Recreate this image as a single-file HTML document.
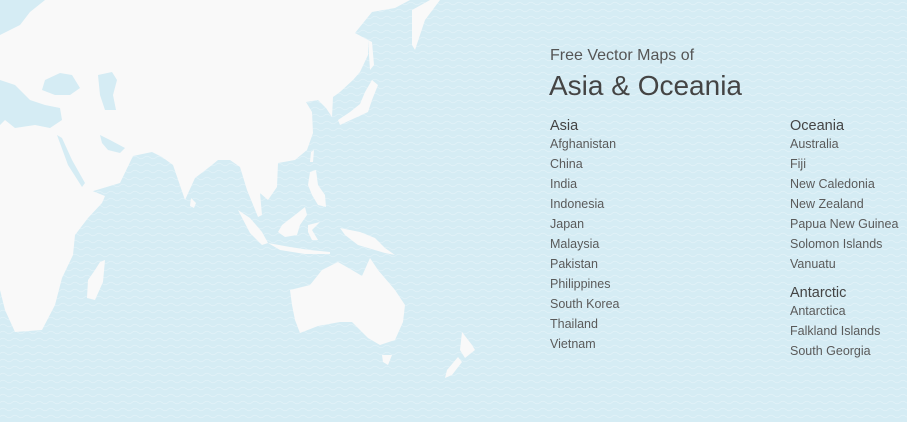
<!DOCTYPE html>
<html><head><meta charset="utf-8">
<style>
html,body{margin:0;padding:0;}
body{width:907px;height:422px;overflow:hidden;position:relative;background:#d5ecf4;font-family:"Liberation Sans",sans-serif;color:#555;}
svg{position:absolute;left:0;top:0;}
.t{position:absolute;white-space:nowrap;}
.col{position:absolute;top:114px;}
.col h3{margin:0;font-weight:normal;font-size:14.5px;color:#444;height:20px;line-height:20px;position:relative;top:2px;}
.col div{font-size:12.5px;line-height:20px;height:20px;color:#5a5a5a;}
</style></head><body>
<svg width="907" height="422" viewBox="0 0 907 422">
<defs>
<pattern id="w" width="12" height="7" patternUnits="userSpaceOnUse">
<path d="M0 3.5 Q3 1 6 3.5 T12 3.5" fill="none" stroke="#e2f2f8" stroke-width="0.8"/>
</pattern>
</defs>
<rect width="907" height="422" fill="url(#w)"/>
<g fill="#f9f9f9">
<path d="M0 0 L410 0 L395 8 L372 12 L355 33 L368 40 L368 55 L360 72 L353 80 L340 92 L333 97 L332 117 L326 108 L318 100 L306 102 L312 112 L313 133 L307 150 L295 160 L278 163 L277 187 L268 200 L260 193 L262 215 L258 217 L247 190 L240 167 L230 160 L218 160 L212 165 L195 178 L185 200 L173 165 L162 157 L152 152 L133 156 L120 183 L90 192 L85 188 L105 196 L102 203 L88 218 L75 235 L73 255 L62 278 L55 305 L42 330 L15 332 L5 310 L0 290 Z"/>
<path d="M412 10 L430 0 L440 0 L425 20 L415 50 L412 45 Z"/>
<path d="M372 80 L378 85 L372 100 L368 112 L355 118 L340 125 L338 120 L350 112 L360 104 L365 92 Z"/>
<path d="M368 40 L372 42 L374 65 L370 70 Z"/>
<path d="M311 152 L314 150 L313 162 L310 162 Z"/>
<path d="M310 172 L316 170 L318 185 L325 195 L326 207 L318 205 L312 195 L308 185 Z"/>
<path d="M282 225 L295 215 L305 207 L307 215 L300 225 L297 235 L285 237 L278 232 Z"/>
<path d="M238 210 L250 218 L262 232 L268 243 L262 245 L250 233 Z"/>
<path d="M268 243 L290 247 L310 250 L330 252 L330 254 L305 254 L280 250 Z"/>
<path d="M308 225 L320 222 L312 230 L318 240 L312 240 L308 232 Z"/>
<path d="M340 228 L360 232 L375 238 L385 248 L395 255 L385 253 L368 248 L358 245 L345 235 Z"/>
<path d="M290 290 L310 285 L322 270 L338 262 L352 270 L362 276 L370 258 L378 270 L395 290 L405 305 L403 322 L395 340 L380 345 L368 338 L352 322 L340 322 L318 326 L300 333 L295 320 L292 305 Z"/>
<path d="M382 355 L392 355 L388 365 L383 362 Z"/>
<path d="M462 332 L472 345 L475 350 L465 358 L460 350 Z"/>
<path d="M458 357 L462 362 L452 375 L445 378 L447 370 Z"/>
<path d="M100 262 L105 260 L103 282 L95 300 L87 298 L88 280 L95 270 Z"/>
<path d="M191 198 L196 203 L194 208 L190 206 Z"/>
</g>
<g fill="#d5ecf4">
<path d="M0 0 L45 0 L30 12 L20 25 L0 35 Z"/>
<path d="M0 80 L15 85 L30 100 L45 105 L60 108 L62 120 L50 128 L35 125 L15 128 L5 120 L0 125 Z"/>
<path d="M45 80 L60 73 L72 75 L80 88 L70 95 L55 95 L42 90 Z"/>
<path d="M98 75 L112 72 L117 80 L113 95 L116 110 L105 110 L100 95 Z"/>
<path d="M57 135 L62 138 L72 160 L85 183 L82 187 L68 165 Z"/>
<path d="M100 135 L110 140 L125 148 L120 153 L108 150 L102 143 Z"/>
</g>
</svg>
<div class="t" style="left:550px;top:47px;font-size:16px;color:#555;">Free Vector Maps of</div>
<div class="t" style="left:549px;top:70px;font-size:28px;color:#444;">Asia &amp; Oceania</div>
<div class="col" style="left:550px;">
<h3>Asia</h3>
<div>Afghanistan</div><div>China</div><div>India</div><div>Indonesia</div><div>Japan</div><div>Malaysia</div><div>Pakistan</div><div>Philippines</div><div>South Korea</div><div>Thailand</div><div>Vietnam</div>
</div>
<div class="col" style="left:790px;">
<h3>Oceania</h3>
<div>Australia</div><div>Fiji</div><div>New Caledonia</div><div>New Zealand</div><div>Papua New Guinea</div><div>Solomon Islands</div><div>Vanuatu</div>
<h3 style="margin-top:7px;">Antarctic</h3>
<div>Antarctica</div><div>Falkland Islands</div><div>South Georgia</div>
</div>
</body></html>
